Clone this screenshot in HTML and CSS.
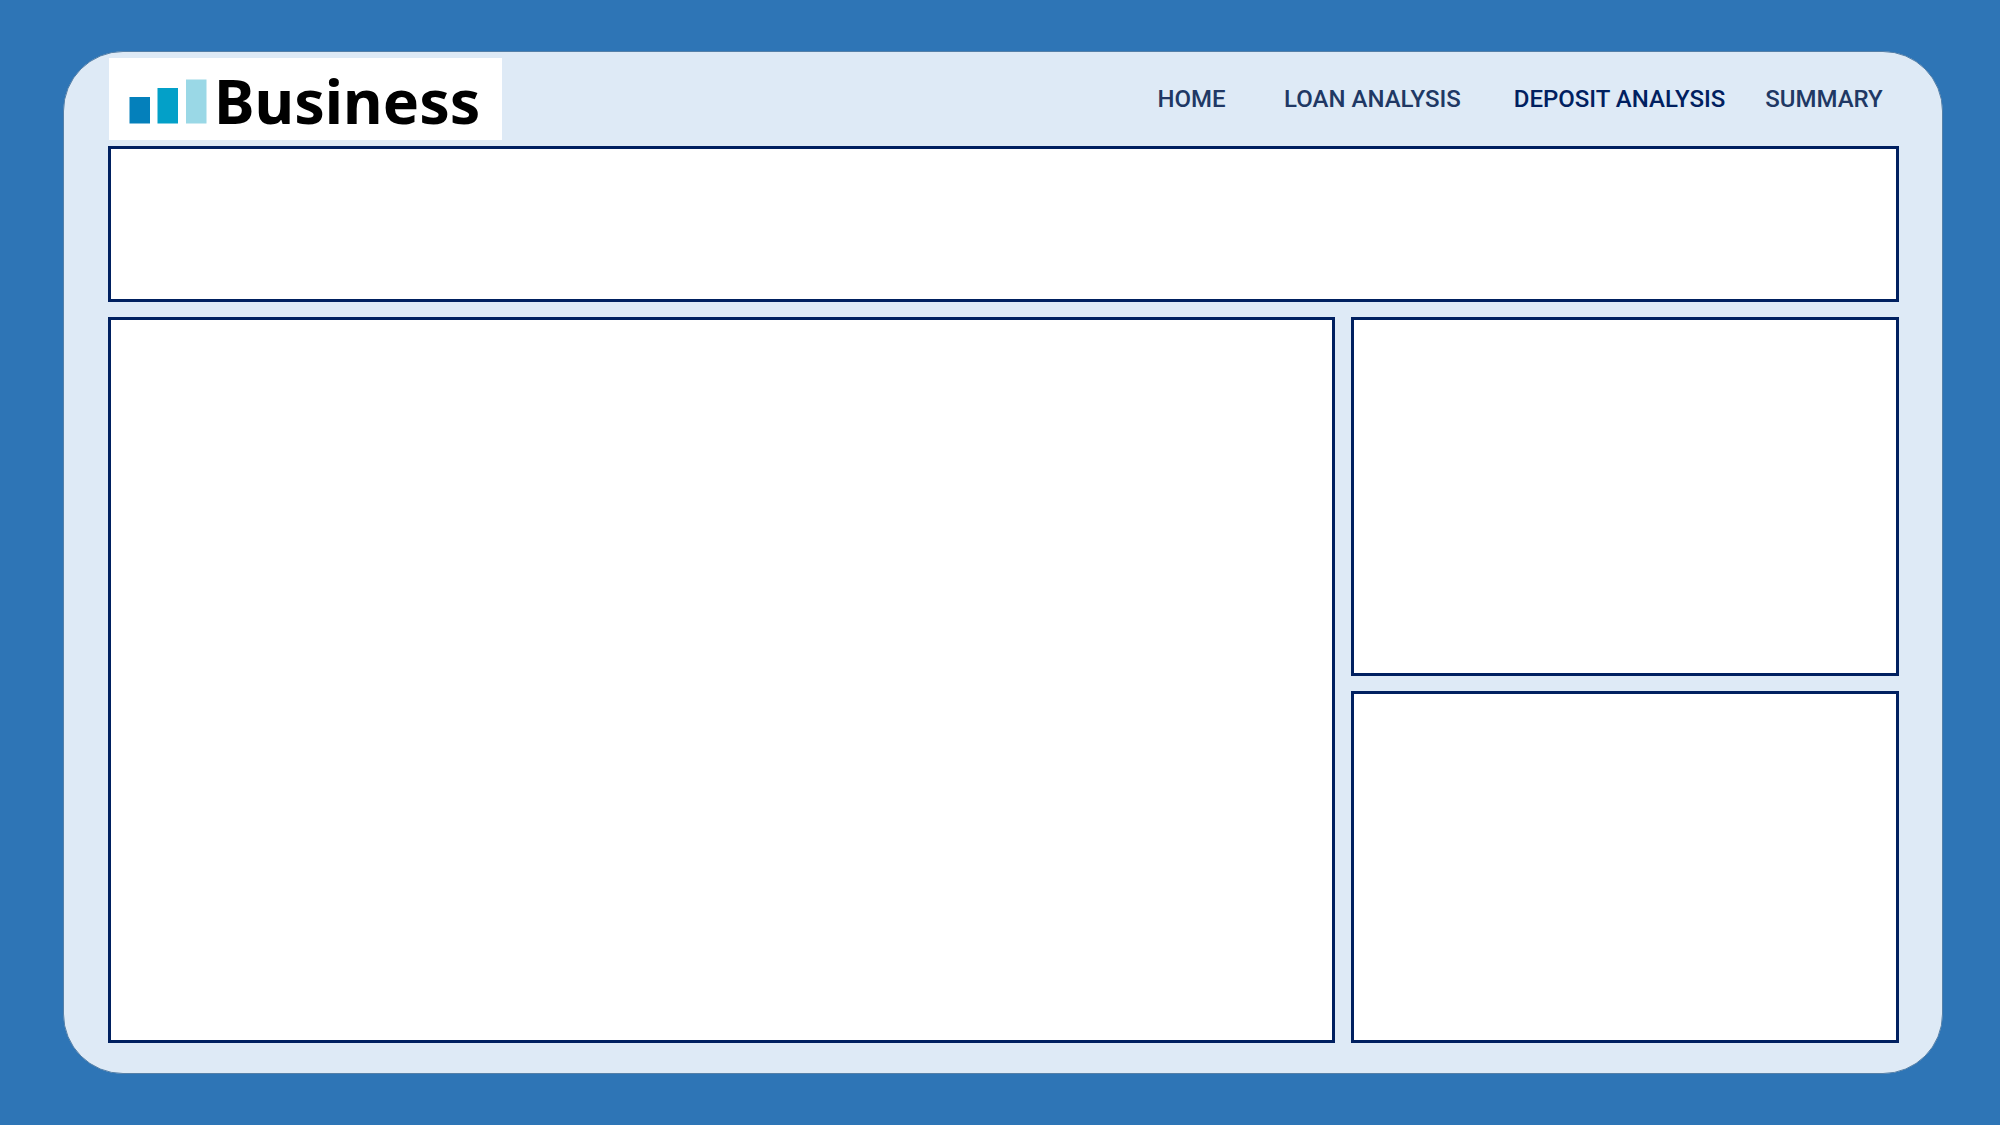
FILE: index.html
```html
<!DOCTYPE html>
<html lang="en">
<head>
<meta charset="utf-8">
<meta name="viewport" content="width=device-width, initial-scale=1">
<title>Deposit Analysis</title>
<link rel="stylesheet" href="styles.css">
</head>
<body>
<div class="panel">
  <header class="header">
    <div class="logo">
      <svg class="logo-bars" width="78" height="45" viewBox="0 0 78 45" aria-hidden="true">
        <rect x="0.5" y="18" width="20.5" height="26.5" fill="#0480bb"/>
        <rect x="28.5" y="9" width="20.5" height="35.5" fill="#03a0c8"/>
        <rect x="57" y="0.5" width="20.5" height="44" fill="#9ad8e6"/>
      </svg>
      <span class="logo-name">Business</span>
    </div>
    <nav class="nav">
      <a href="#home">HOME</a>
      <a href="#loan">LOAN ANALYSIS</a>
      <a class="current" href="#deposit" aria-current="page">DEPOSIT ANALYSIS</a>
      <a href="#summary">SUMMARY</a>
    </nav>
  </header>
  <main class="board">
    <section class="card banner"></section>
    <section class="card primary"></section>
    <section class="card"></section>
    <section class="card"></section>
  </main>
</div>
</body>
</html>
```
FILE: styles.css
```css
* {
  box-sizing: border-box;
}

body {
  margin: 0;
  min-height: 100vh;
  padding: 51px 57px 51px 63px;
  display: flex;
  background: #2e75b6;
  font-family: Roboto, "Liberation Sans", sans-serif;
}

.panel {
  flex: 1;
  display: flex;
  flex-direction: column;
  padding: 6px 43px 30px 44px;
  border: 1px solid #5580a8;
  border-radius: 60px;
  background: #deeaf6;
}

.header {
  display: flex;
  justify-content: space-between;
  align-items: center;
  padding: 0 0 6px 1px;
}

.logo {
  display: flex;
  align-items: center;
  gap: 7px;
  height: 82px;
  padding: 4px 22px 0 20px;
  background: #fff;
}

.logo-name {
  font-family: "Noto Sans", sans-serif;
  font-size: 61px;
  font-weight: 700;
  line-height: 76px;
  color: #000;
}

.nav {
  display: grid;
  grid-template-columns: 127px 235px 259px 150px;
  text-align: center;
}

.nav a {
  font-size: 24px;
  font-weight: 500;
  line-height: 32px;
  color: #203864;
  text-decoration: none;
  white-space: nowrap;
}

.nav .current {
  color: #002060;
}

.board {
  flex: 1;
  display: grid;
  grid-template-columns: 1227fr 548fr;
  grid-template-rows: 156px 359fr 352fr;
  gap: 15px 16px;
}

.card {
  border: 3px solid #002060;
  background: #fff;
}

.banner {
  grid-column: 1 / -1;
}

.primary {
  grid-row: 2 / 4;
}
```
